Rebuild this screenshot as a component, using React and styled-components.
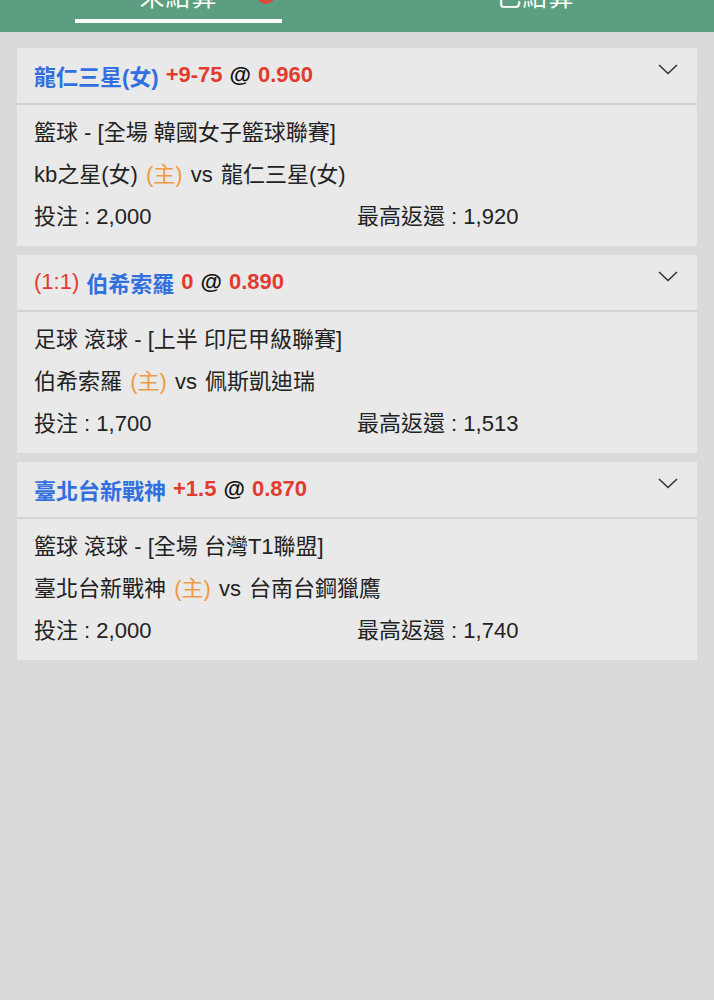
import React from 'react';
import styled, { createGlobalStyle } from 'styled-components';

const GlobalStyle = createGlobalStyle`
    html, body {
        margin: 0;
        padding: 0;
        background: #dadada;
    }
    body {
        font-family: "Liberation Sans", "Noto Sans CJK TC", sans-serif;
        color: #222;
    }
`;

const bets = [
    {
        prefix: null,
        team: '龍仁三星(女)',
        line: '+9-75',
        odds: '0.960',
        league: '籃球 - [全場 韓國女子籃球聯賽]',
        home: 'kb之星(女)',
        away: '龍仁三星(女)',
        stake: '2,000',
        payout: '1,920',
    },
    {
        prefix: '(1:1)',
        team: '伯希索羅',
        line: '0',
        odds: '0.890',
        league: '足球 滾球 - [上半 印尼甲級聯賽]',
        home: '伯希索羅',
        away: '佩斯凱迪瑞',
        stake: '1,700',
        payout: '1,513',
    },
    {
        prefix: null,
        team: '臺北台新戰神',
        line: '+1.5',
        odds: '0.870',
        league: '籃球 滾球 - [全場 台灣T1聯盟]',
        home: '臺北台新戰神',
        away: '台南台鋼獵鷹',
        stake: '2,000',
        payout: '1,740',
    },
];

const App = () => {
    return (
        <Page>
            <GlobalStyle />
            <TabBar>
                <Tab>
                    <TabLabel>未結算</TabLabel>
                    <Underline />
                    <Badge />
                </Tab>
                <Tab>
                    <TabLabel>已結算</TabLabel>
                </Tab>
            </TabBar>
            <List>
                {bets.map((bet, i) => (
                    <Card key={i}>
                        <CardHeader>
                            <Title>
                                {bet.prefix && <Score>{bet.prefix}</Score>}
                                <Team>{bet.team}</Team>
                                <Odds>{bet.line}</Odds>
                                <At>@</At>
                                <Odds>{bet.odds}</Odds>
                            </Title>
                            <Chevron width="20" height="11" viewBox="0 0 20 11">
                                <polyline points="1,1 10,9.5 19,1" fill="none" stroke="#333" strokeWidth="1.6" />
                            </Chevron>
                        </CardHeader>
                        <CardBody>
                            <Row>{bet.league}</Row>
                            <Matchup>
                                {bet.home} <Home>(主)</Home> vs {bet.away}
                            </Matchup>
                            <Amounts>
                                <span>投注 : {bet.stake}</span>
                                <span>最高返還 : {bet.payout}</span>
                            </Amounts>
                        </CardBody>
                    </Card>
                ))}
            </List>
        </Page>
    );
};

const Page = styled.div`
    min-height: 1000px;
    background: #dadada;
`;

const TabBar = styled.div`
    display: flex;
    height: 32px;
    background: #5c9f80;
    overflow: hidden;
`;

const Tab = styled.div`
    flex: 1;
    position: relative;
    display: flex;
    flex-direction: column;
    align-items: center;
`;

const TabLabel = styled.div`
    margin-top: -16px;
    height: 26px;
    font-size: 25px;
    line-height: 26px;
    color: #fff;
    letter-spacing: 1px;
`;

const Underline = styled.div`
    margin-top: 9px;
    width: 207px;
    height: 4px;
    background: #fff;
`;

const Badge = styled.div`
    position: absolute;
    left: 256px;
    top: -16px;
    width: 20px;
    height: 20px;
    border-radius: 50%;
    background: #de4a3e;
`;

const List = styled.div`
    display: flex;
    flex-direction: column;
    gap: 9px;
    padding: 16px 17px;
`;

const Card = styled.div`
    background: #e9e9e9;
`;

const CardHeader = styled.div`
    height: 55px;
    display: flex;
    align-items: center;
    justify-content: space-between;
    padding: 0 19px 0 17px;
    border-bottom: 2px solid #d3d3d3;
`;

const Title = styled.div`
    display: flex;
    align-items: center;
    gap: 7px;
    font-size: 22px;
    margin-top: -2px;
`;

const Score = styled.span`
    color: #e23b30;
`;

const Team = styled.span`
    color: #3270e0;
    font-weight: 600;
`;

const Odds = styled.span`
    color: #e23b30;
    font-weight: 700;
`;

const At = styled.span`
    color: #111;
    font-weight: 700;
`;

const Chevron = styled.svg`
    display: block;
    margin-top: -12px;
`;

const CardBody = styled.div`
    padding: 7px 17px 8px;
    font-size: 22px;
`;

const Row = styled.div`
    height: 42px;
    line-height: 42px;
    white-space: nowrap;
`;

const Matchup = styled(Row)`
    word-spacing: 2px;
`;

const Home = styled.span`
    color: #ef9a46;
`;

const Amounts = styled(Row)`
    display: grid;
    grid-template-columns: 1fr 1fr;
`;

export default App;
